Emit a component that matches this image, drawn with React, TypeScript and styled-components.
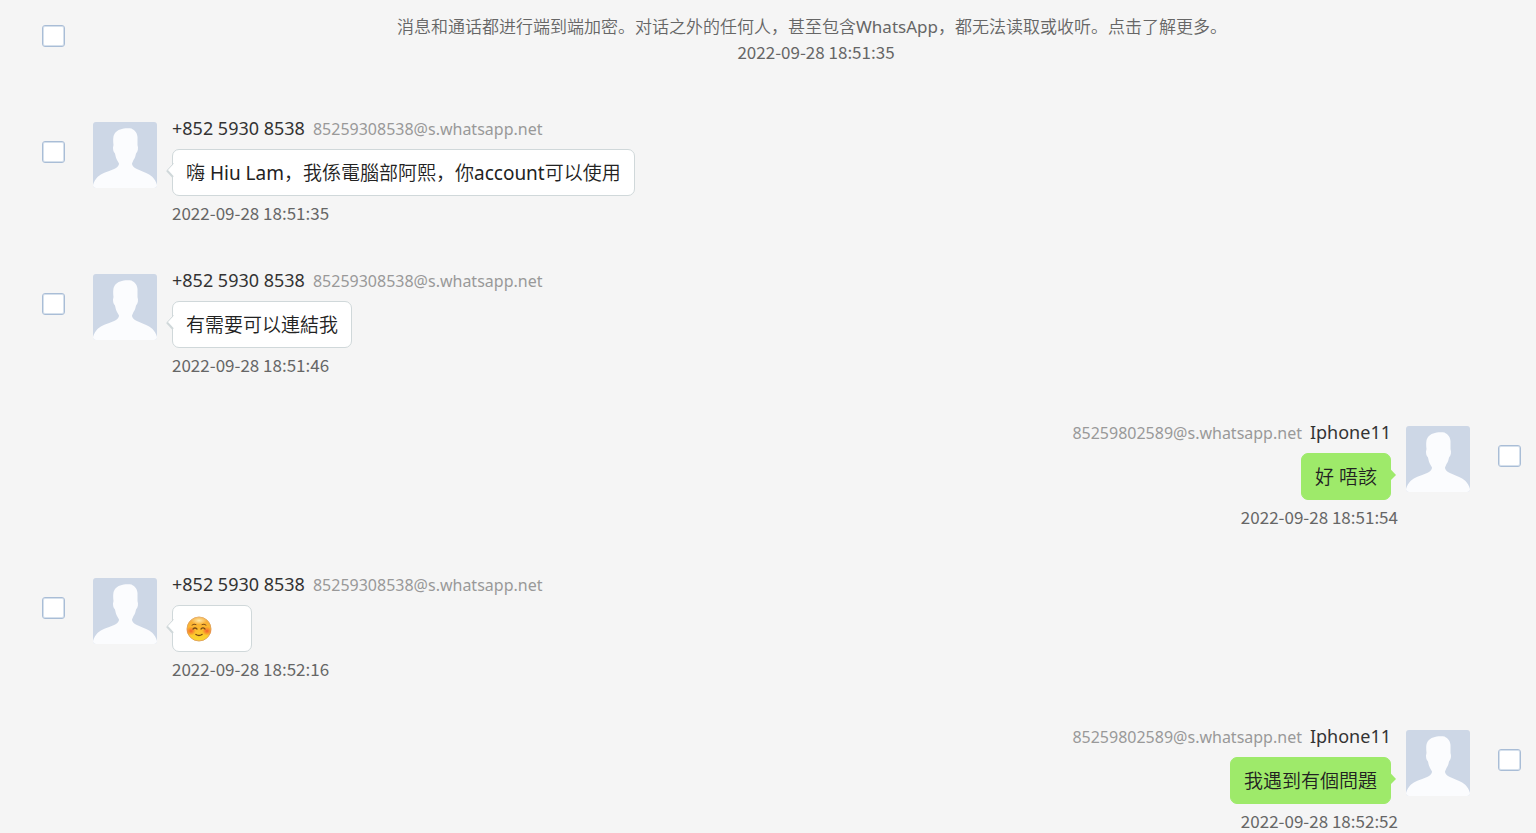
import React from "react";
import styled, { createGlobalStyle, css } from "styled-components";

const textFont = `"Noto Sans", "Noto Sans CJK SC DemiLight", "Noto Sans CJK SC", sans-serif`;

const GlobalStyle = createGlobalStyle`
  *, *::before, *::after { box-sizing: border-box; }
  body {
    margin: 0;
    background: #f5f5f5;
    color: #222;
    font-family: "Noto Sans CJK SC", sans-serif;
  }
`;

type Side = "left" | "right";

const Log = styled.main`
  display: flex;
  flex-direction: column;
  gap: 47px;
  padding: 14px 15px 0 42px;
`;

const NoticeRow = styled.section`
  display: flex;
  align-items: flex-start;
  padding-bottom: 6px;
`;

const NoticeBody = styled.div`
  flex: 1;
  text-align: center;
  font-size: 17px;
  line-height: 24px;
  color: #666;
  padding-left: 46px;
`;

const NoticeText = styled.p`
  margin: 0;
  padding-right: 8px;
  font-family: ${textFont};
  line-height: 26px;
`;

const NoticeTime = styled.time`
  display: block;
`;

const Row = styled.article<{ $side: Side }>`
  display: flex;
  align-items: flex-start;
  flex-direction: ${(p) => (p.$side === "right" ? "row-reverse" : "row")};
`;

const Tick = styled.input<{ $top: number }>`
  appearance: none;
  flex: none;
  width: 23px;
  height: 22px;
  margin: ${(p) => p.$top}px 0 0;
  border: 1px solid #a9bdd6;
  box-shadow: inset 0 0 0 1px #d5e0ec;
  border-radius: 3px;
  background: #fff;
`;

const Picture = styled.svg`
  flex: none;
  width: 64px;
  height: 66px;
  margin: 5px 28px 0;
  border-radius: 3px;
`;

const Column = styled.div<{ $side: Side }>`
  display: flex;
  flex-direction: column;
  gap: 8px;
  ${(p) =>
    p.$side === "right"
      ? css`align-items: flex-end; margin-right: -20px;`
      : css`align-items: flex-start; margin-left: -13px;`}
`;

const Heading = styled.header<{ $side: Side }>`
  display: flex;
  align-items: baseline;
  gap: 8px;
  height: 24px;
  line-height: 22px;
  font-family: ${textFont};
  flex-direction: ${(p) => (p.$side === "right" ? "row-reverse" : "row")};
  margin-right: ${(p) => (p.$side === "right" ? 7 : 0)}px;
`;

const Name = styled.span`
  font-size: 18px;
  color: #333;
`;

const Address = styled.span`
  font-size: 16px;
  color: #999;
`;

const Bubble = styled.div<{ $side: Side }>`
  position: relative;
  min-width: 80px;
  height: 47px;
  padding: 0 13px;
  display: flex;
  align-items: center;
  border: 1px solid #d0d8da;
  border-radius: 7px;
  background: #fff;
  font-family: ${textFont};
  font-size: 19px;
  line-height: 28px;
  ${(p) =>
    p.$side === "right" &&
    css`
      margin-right: 7px;
      border-color: #9eea6a;
      background: #9eea6a;
    `}
`;

const Tail = styled.svg<{ $side: Side }>`
  position: absolute;
  top: 12px;
  ${(p) => (p.$side === "right" ? "right: -7px;" : "left: -8px;")}
  width: 9px;
  height: 18px;
`;

const Stamp = styled.time`
  display: block;
  font-size: 17px;
  line-height: 18px;
  color: #666;
`;

const Smile = styled.svg`
  width: 26px;
  height: 26px;
`;

function Avatar() {
  return (
    <Picture viewBox="0 0 64 66" role="img" aria-label="avatar">
      <rect width="64" height="66" fill="#cdd7e6" />
      <path
        fill="#fbfcfe"
        d="M0 66V63C2 56 6 53 12 50.500C17 48.500 21 47.500 23 46C25 44.500 26 43 26 41.500L24 38C23 36 22.500 34 22 31.500C20.500 30 20 28 20 25.500L20.500 23C20 17 20 14 22 11C25 7 32 5.500 38.500 6.500C40 7.500 44 9 44.500 15L44.500 23C45.500 26 45 29.500 43 31.500C42.500 34 42 36 40.500 38L39 41.500C39 43 40 44.500 42 46C44 47.500 48 48.500 52 50.500C58 53 62 56 64 63V66Z"
      />
    </Picture>
  );
}

function Pointer({ side }: { side: Side }) {
  return (
    <Tail $side={side} viewBox="0 0 9 18" aria-hidden="true">
      {side === "right" ? (
        <path d="M1 1.500L8 9L1 16Z" fill="#9eea6a" />
      ) : (
        <>
          <path d="M9 1.500L2 8.500L9 15.500Z" fill="#fff" />
          <path d="M8.500 1.500L2 8.500" fill="none" stroke="#d0d8da" />
          <path d="M2 8.500L8 15" fill="none" stroke="#d0d8da" strokeWidth="2" />
        </>
      )}
    </Tail>
  );
}

function Blush() {
  return (
    <Smile viewBox="0 0 26 26" role="img" aria-label="smiling face">
      <defs>
        <linearGradient id="face" x1="0" y1="0" x2="0" y2="1">
          <stop offset="0" stopColor="#f7a93c" />
          <stop offset="0.45" stopColor="#fcb92f" />
          <stop offset="1" stopColor="#fbd92b" />
        </linearGradient>
        <radialGradient id="shine">
          <stop offset="0" stopColor="#ffe9a8" />
          <stop offset="1" stopColor="#ffe9a8" stopOpacity="0" />
        </radialGradient>
        <radialGradient id="cheek">
          <stop offset="0" stopColor="#f4592c" stopOpacity="0.95" />
          <stop offset="1" stopColor="#f4692c" stopOpacity="0" />
        </radialGradient>
      </defs>
      <circle cx="13" cy="13" r="12" fill="url(#face)" stroke="#e2a55d" />
      <ellipse cx="13" cy="4.500" rx="8" ry="4" fill="url(#shine)" />
      <ellipse cx="5" cy="15" rx="5" ry="4.500" fill="url(#cheek)" />
      <ellipse cx="21" cy="15" rx="5" ry="4.500" fill="url(#cheek)" />
      <g fill="none" stroke="#7a4a16" strokeLinecap="round">
        <path d="M6 9Q8 7.500 10 8.500M16 8.500Q18 7.500 20 9" strokeWidth="0.900" />
        <path d="M7 13Q9 11 11 13M15 13Q17 11 19 13" strokeWidth="1.200" />
        <path d="M10 18.500Q13 20.500 16 18.500" strokeWidth="1.500" />
      </g>
    </Smile>
  );
}

interface Message {
  side: Side;
  name: string;
  address: string;
  body: React.ReactNode;
  time: string;
}

const them = { side: "left" as Side, name: "+852 5930 8538", address: "85259308538@s.whatsapp.net" };
const me = { side: "right" as Side, name: "Iphone11", address: "85259802589@s.whatsapp.net" };

const messages: Message[] = [
  { ...them, body: "嗨 Hiu Lam，我係電腦部阿熙，你account可以使用", time: "2022-09-28 18:51:35" },
  { ...them, body: "有需要可以連結我", time: "2022-09-28 18:51:46" },
  { ...me, body: "好 唔該", time: "2022-09-28 18:51:54" },
  { ...them, body: <Blush />, time: "2022-09-28 18:52:16" },
  { ...me, body: "我遇到有個問題", time: "2022-09-28 18:52:52" },
];

export default function App() {
  return (
    <>
      <GlobalStyle />
      <Log>
        <NoticeRow>
          <Tick type="checkbox" $top={11} aria-label="Select notice" />
          <NoticeBody>
            <NoticeText>消息和通话都进行端到端加密。对话之外的任何人，甚至包含WhatsApp，都无法读取或收听。点击了解更多。</NoticeText>
            <NoticeTime>2022-09-28 18:51:35</NoticeTime>
          </NoticeBody>
        </NoticeRow>
        {messages.map((m) => (
          <Row key={m.time} $side={m.side}>
            <Tick type="checkbox" $top={24} aria-label={`Select message ${m.time}`} />
            <Avatar />
            <Column $side={m.side}>
              <Heading $side={m.side}>
                <Name>{m.name}</Name>
                <Address>{m.address}</Address>
              </Heading>
              <Bubble $side={m.side}>
                <Pointer side={m.side} />
                {m.body}
              </Bubble>
              <Stamp>{m.time}</Stamp>
            </Column>
          </Row>
        ))}
      </Log>
    </>
  );
}
